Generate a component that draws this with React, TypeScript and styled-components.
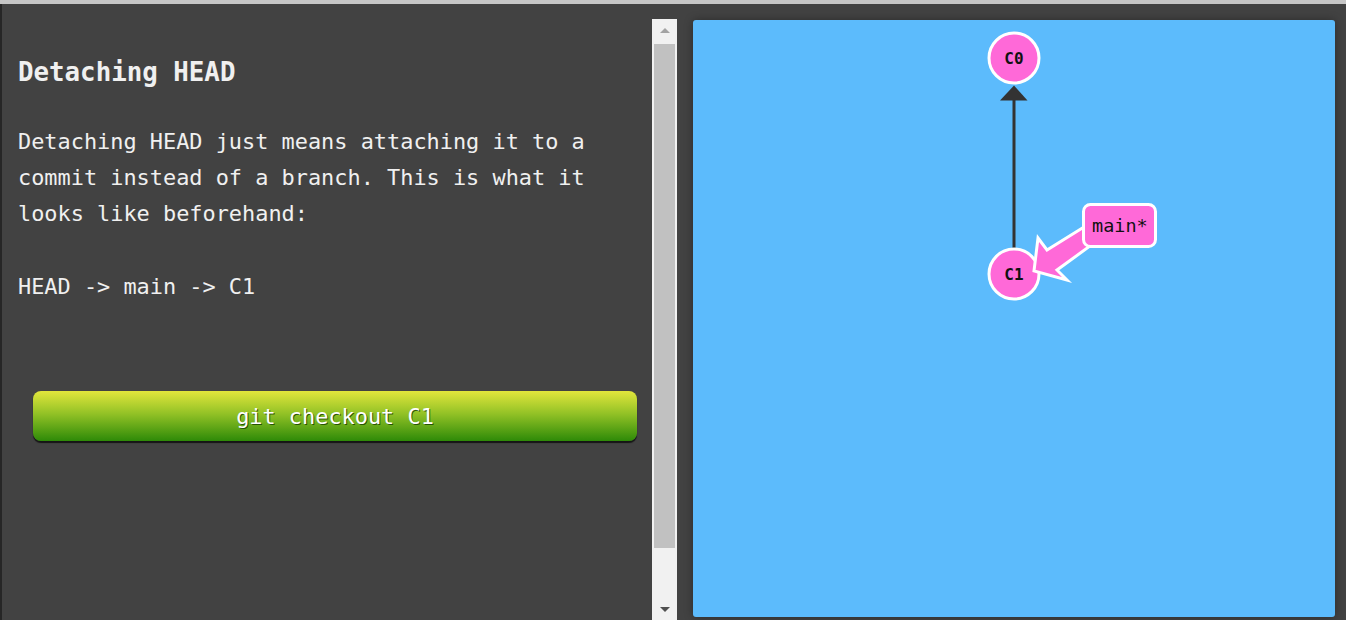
import React from 'react'
import styled, { createGlobalStyle } from 'styled-components'

const GlobalStyle = createGlobalStyle`
  html, body {
    margin: 0;
    padding: 0;
    background: #424242;
    overflow: hidden;
  }
`

const mono = `"DejaVu Sans Mono", "Liberation Mono", monospace`

const Page = styled.div`
  display: flex;
  flex-direction: column;
  width: 1346px;
  height: 620px;
  background: #424242;
`

const TopStrip = styled.div`
  height: 4px;
  background: #c6c6c6;
  flex: none;
`

const Main = styled.div`
  display: flex;
  flex: 1;
  min-height: 0;
`

const EdgeStrip = styled.div`
  width: 2px;
  background: #262626;
  flex: none;
`

const Instructions = styled.div`
  width: 634px;
  padding-left: 16px;
  flex: none;
  color: #f0f0f0;
  font-family: ${mono};
`

const Heading = styled.h2`
  margin: 53px 0 0 0;
  font-size: 25.8px;
  line-height: 30px;
  font-weight: bold;
`

const Paragraph = styled.p`
  margin: 37px 0 0 0;
  font-size: 21.9px;
  line-height: 36px;
  width: 600px;
`

const CommandButton = styled.button`
  display: block;
  margin: 86px 0 0 15px;
  width: 604px;
  height: 50px;
  border: none;
  border-radius: 8px;
  background: linear-gradient(to bottom, #e2e63c 0%, #93c226 45%, #2e8a08 100%);
  box-shadow: 0 2px 1px #151515;
  color: #ffffff;
  font-family: ${mono};
  font-size: 21.9px;
  text-shadow: 1px 1px 0 rgba(20, 60, 0, 0.8);
  padding: 0;
  cursor: pointer;
`

const Scrollbar = styled.div`
  margin-top: 15px;
  width: 25px;
  flex: none;
  background: #f1f1f1;
  display: flex;
  flex-direction: column;
  align-items: center;
`

const ScrollArrow = styled.div<{ $down?: boolean }>`
  height: 25px;
  width: 25px;
  display: flex;
  align-items: center;
  justify-content: center;
  flex: none;

  &::before {
    content: '';
    width: 0;
    height: 0;
    border-left: 5px solid transparent;
    border-right: 5px solid transparent;
    ${(p) =>
      p.$down
        ? 'border-top: 5px solid #505050; margin-top: 4px;'
        : 'border-bottom: 5px solid #a3a3a3; margin-top: -2px;'}
  }
`

const ScrollThumb = styled.div`
  width: 21px;
  height: 504px;
  background: #c1c1c1;
  flex: none;
`

const ScrollSpacer = styled.div`
  flex: 1;
`

const Canvas = styled.div`
  margin: 16px 0 0 16px;
  width: 642px;
  height: 597px;
  flex: none;
  background: #5cbbfc;
  border-radius: 3px;
  box-shadow: 0 0 8px rgba(0, 0, 0, 0.35);
`

const Graph = styled.svg`
  display: block;
`

const NodeLabel = styled.text`
  font-family: ${mono};
  font-size: 16px;
  font-weight: bold;
  fill: #111;
`

const BranchLabel = styled.text`
  font-family: ${mono};
  font-size: 18.5px;
  fill: #111;
`

const PINK = '#ff69d8'

const commits = [
  { id: 'C0', x: 321, y: 38 },
  { id: 'C1', x: 321, y: 254 },
]

const GitTree: React.FC = () => (
  <Graph width={642} height={597} viewBox="0 0 642 597">
    <line x1={321} y1={228} x2={321} y2={80} stroke="#333" strokeWidth={3} />
    <polygon points="307,80.5 334.5,80.5 321,65.5" fill="#333" />
    {commits.map((c) => (
      <g key={c.id}>
        <circle cx={c.x} cy={c.y} r={25} fill={PINK} stroke="#fff" strokeWidth={3} />
        <NodeLabel x={c.x} y={c.y + 6} textAnchor="middle">
          {c.id}
        </NodeLabel>
      </g>
    ))}
    <polygon
      points="341,251 345,218 354,230 391,207 397,226 364,250 374,260"
      fill={PINK}
      stroke="#fff"
      strokeWidth={3}
      strokeLinejoin="miter"
    />
    <rect x={390.5} y={184.5} width={72} height={42} rx={7} fill={PINK} stroke="#fff" strokeWidth={3} />
    <BranchLabel x={399} y={212}>
      main*
    </BranchLabel>
  </Graph>
)

export default function App() {
  return (
    <>
      <GlobalStyle />
      <Page>
        <TopStrip />
        <Main>
          <EdgeStrip />
          <Instructions>
            <Heading>Detaching HEAD</Heading>
            <Paragraph>
              Detaching HEAD just means attaching it to a commit instead of a branch. This is what it
              looks like beforehand:
            </Paragraph>
            <Paragraph>HEAD -&gt; main -&gt; C1</Paragraph>
            <CommandButton>git checkout C1</CommandButton>
          </Instructions>
          <Scrollbar>
            <ScrollArrow />
            <ScrollThumb />
            <ScrollSpacer />
            <ScrollArrow $down />
          </Scrollbar>
          <Canvas>
            <GitTree />
          </Canvas>
        </Main>
      </Page>
    </>
  )
}
